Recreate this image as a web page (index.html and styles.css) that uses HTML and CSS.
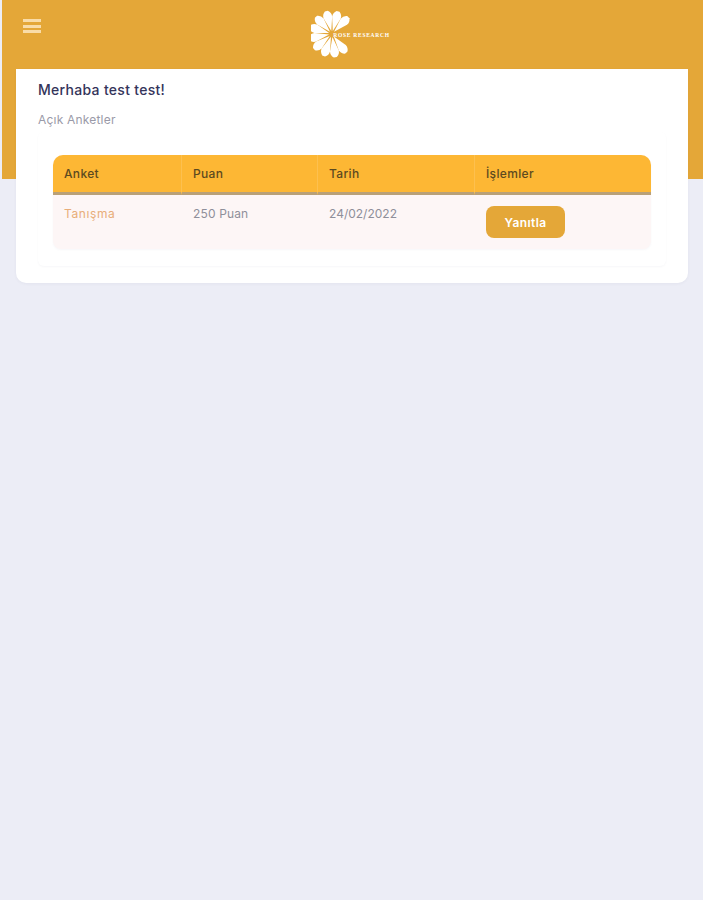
FILE: index.html
```html
<!DOCTYPE html>
<html lang="tr">
<head>
<meta charset="utf-8">
<title>Anketler</title>
<link rel="stylesheet" href="styles.css">
</head>
<body>
<div class="page">
  <header class="topbar">
    <button class="menu" aria-label="Menü">
      <span></span><span></span><span></span>
    </button>
    <div class="logo">
      <svg class="flower" width="46" height="50" viewBox="-21 -25 46 50" aria-hidden="true">
        <defs>
          <path id="petal" d="M0 -3 L-4.4 -17 Q-4.8 -21 -1.5 -23.5 L1.5 -23.5 Q4.8 -21 4.4 -17 Z" fill="#fff"/>
        </defs>
        <use href="#petal" transform="rotate(44)"/>
        <use href="#petal" transform="rotate(15)"/>
        <use href="#petal" transform="rotate(-14)"/>
        <use href="#petal" transform="rotate(-43)"/>
        <use href="#petal" transform="rotate(-72)"/>
        <use href="#petal" transform="rotate(-101)"/>
        <use href="#petal" transform="rotate(-130)"/>
        <use href="#petal" transform="rotate(-159)"/>
        <use href="#petal" transform="rotate(172)"/>
        <use href="#petal" transform="rotate(143)"/>
      </svg>
      <span class="brand">ROSE RESEARCH</span>
    </div>
  </header>

  <main class="card">
    <h1 class="greeting">Merhaba test test!</h1>
    <p class="subtitle">Açık Anketler</p>
    <section class="panel">
      <div class="table-wrap">
        <table class="surveys">
          <thead>
            <tr>
              <th class="col-a">Anket</th>
              <th class="col-b">Puan</th>
              <th class="col-c">Tarih</th>
              <th class="col-d">İşlemler</th>
            </tr>
          </thead>
          <tbody>
            <tr>
              <td class="survey-name">Tanışma</td>
              <td>250 Puan</td>
              <td class="survey-date">24/02/2022</td>
              <td><button class="reply">Yanıtla</button></td>
            </tr>
          </tbody>
        </table>
      </div>
    </section>
  </main>
</div>
</body>
</html>
```
FILE: styles.css
```css
* { box-sizing: border-box; }

html, body {
  margin: 0;
  height: 100%;
}

body {
  font-family: "Inter", "Liberation Sans", sans-serif;
  background-color: #ecedf6;
}

.page {
  min-height: 900px;
  padding: 0 15px 0 16px;
  background: linear-gradient(#e4a738, #e4a738) no-repeat 2px 0 / 701px 179px;
}

.topbar {
  height: 69px;
  position: relative;
  display: flex;
  justify-content: center;
  padding-top: 9px;
}

.menu {
  position: absolute;
  left: 7px;
  top: 19px;
  width: 18px;
  height: 14px;
  padding: 0;
  border: 0;
  background: none;
  display: flex;
  flex-direction: column;
  justify-content: space-between;
}

.menu span {
  display: block;
  height: 3px;
  background: #f9dca8;
}

.logo {
  display: flex;
  align-items: center;
  height: 50px;
  margin-right: 3px;
}

.flower { flex: none; }

.brand {
  margin: 2px 0 0 -24px;
  font-family: "Liberation Serif", serif;
  font-weight: 700;
  font-size: 5.5px;
  letter-spacing: 0.72px;
  color: #fff;
  white-space: nowrap;
  position: relative;
}

.card {
  background: #fff;
  border-radius: 0 0 10px 10px;
  height: 214px;
  padding: 12px 22px 0;
  box-shadow: 0 1px 3px rgba(80, 80, 120, 0.06);
}

.greeting {
  margin: 0;
  font-size: 14px;
  line-height: 17px;
  font-weight: 500;
  letter-spacing: 0.3px;
  color: #34345a;
}

.subtitle {
  margin: 14px 0 0;
  font-size: 12px;
  line-height: 16px;
  letter-spacing: 0.2px;
  color: #9a9aa8;
}

.panel {
  margin-top: 4px;
  height: 134px;
  padding: 23px 15px 0;
  border-radius: 6px;
  box-shadow: 0 1px 2px rgba(90, 90, 130, 0.05);
}

.table-wrap {
  border-radius: 10px 10px 8px 8px;
  overflow: hidden;
  background: #fdf6f6;
  box-shadow: 0 1px 2px rgba(90, 90, 130, 0.05);
}

.surveys {
  width: 598px;
  height: 94px;
  border-collapse: separate;
  border-spacing: 0;
  table-layout: fixed;
  font-size: 12px;
}

.surveys th {
  height: 40px;
  padding: 0 11px;
  background: #fdb734;
  border-bottom: 3px solid #b9a077;
  border-right: 1px solid #fdc04f;
  text-align: left;
  font-weight: 500;
  letter-spacing: 0.35px;
  color: #5c4a20;
}

.surveys th:last-child { border-right: 0; }

.surveys td {
  height: 54px;
  padding: 11px 11px 0;
  vertical-align: top;
  line-height: 16px;
  letter-spacing: 0.15px;
  color: #8f8f9a;
}

.col-a { width: 129px; }
.col-b { width: 136px; }
.col-c { width: 157px; }
.col-d { width: 176px; }

.surveys .survey-name {
  color: #e8ad79;
  letter-spacing: 0.6px;
}

.surveys .survey-date { letter-spacing: 0; }

.reply {
  display: block;
  width: 79px;
  height: 32px;
  border: 0;
  border-radius: 8px;
  background: #e4a738;
  color: #fff;
  letter-spacing: 0.4px;
  font: 600 12px "Inter", "Liberation Sans", sans-serif;
}
```
